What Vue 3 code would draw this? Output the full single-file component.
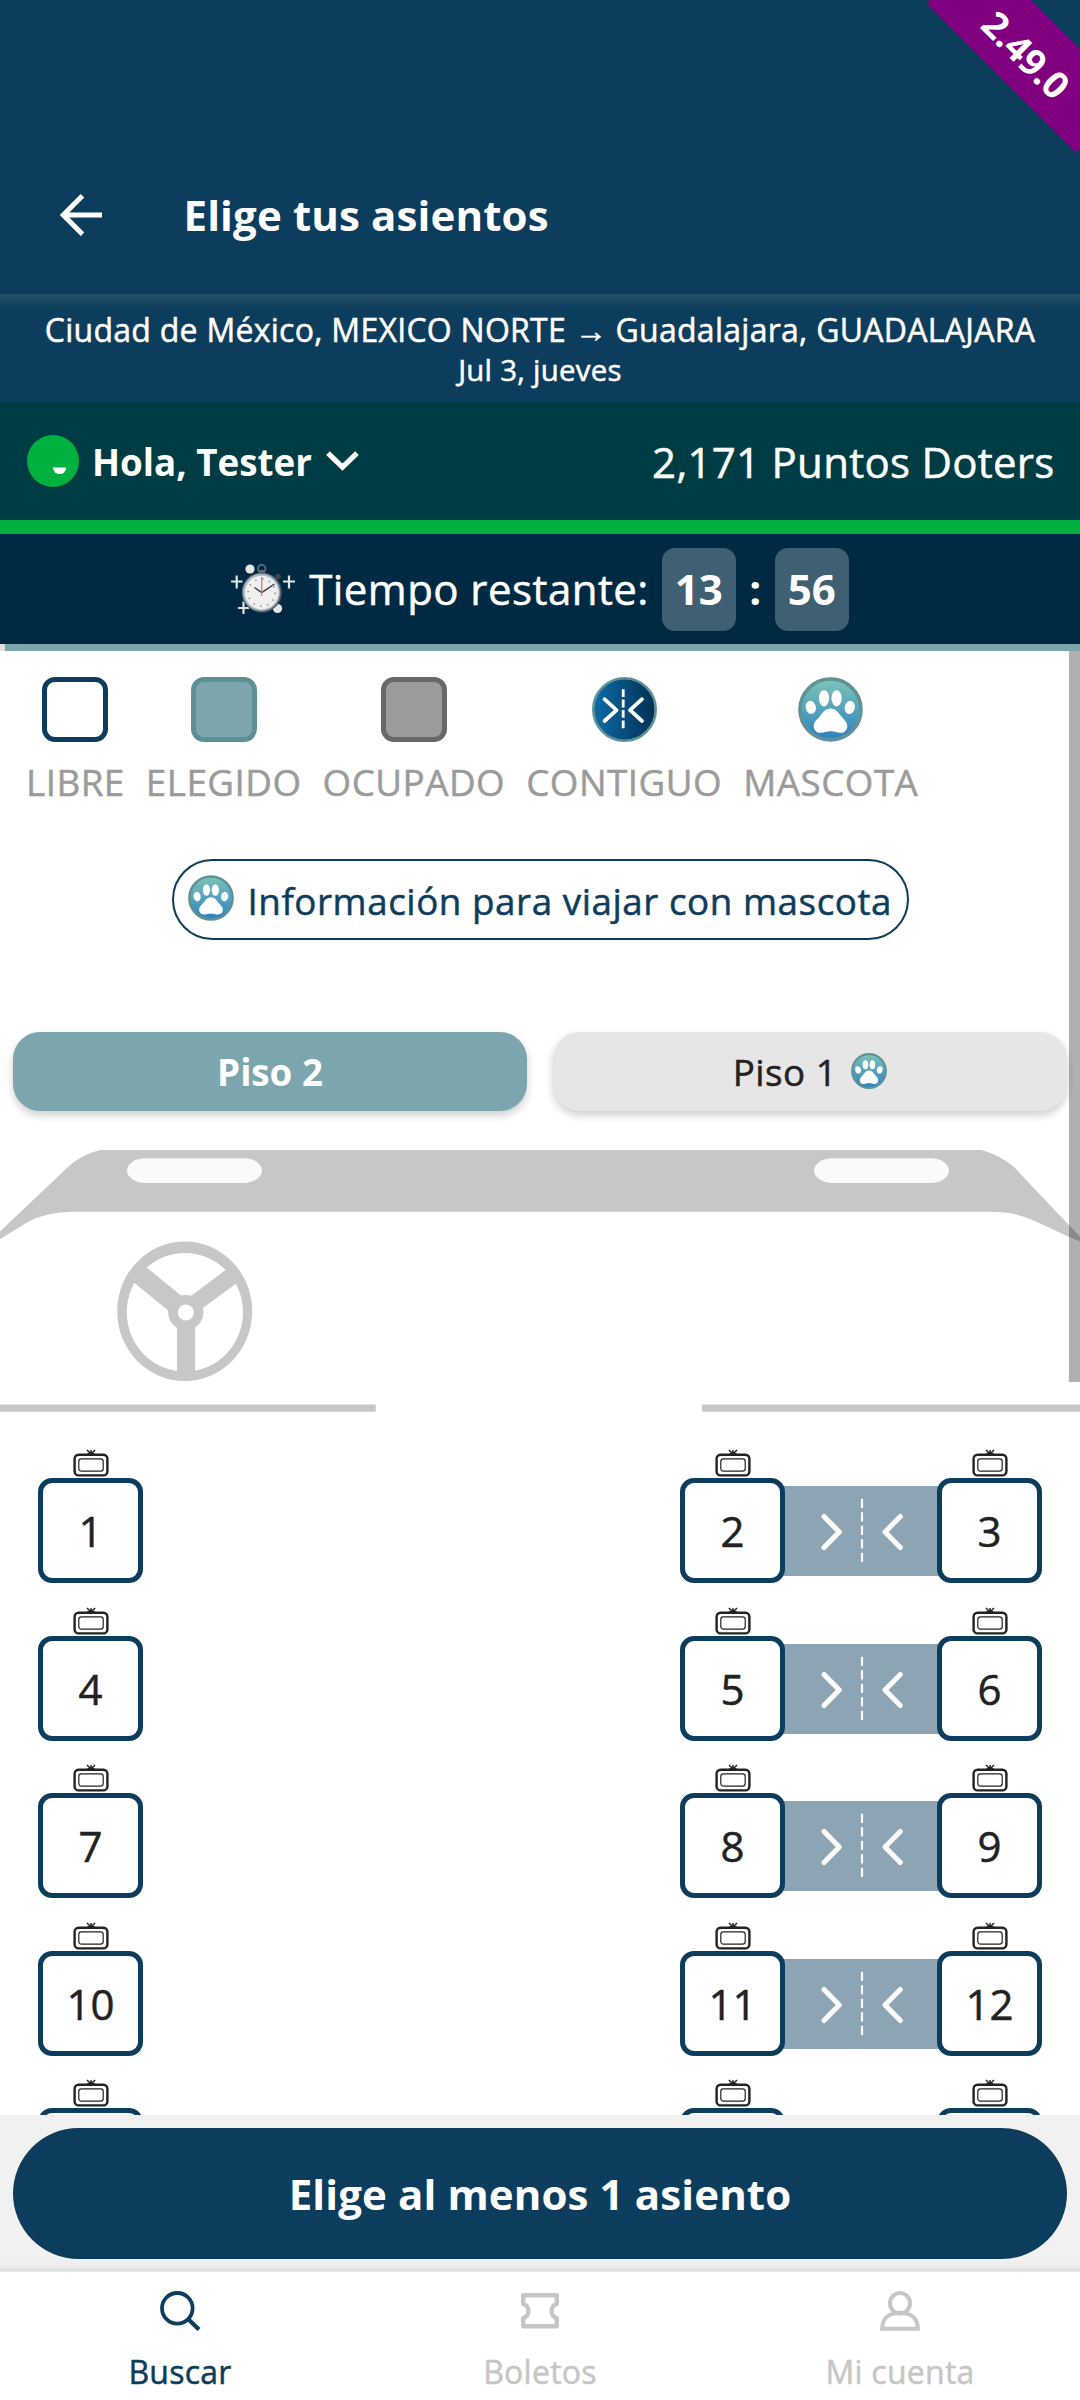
<script setup>
import { h } from 'vue'

const legend = [
  { label: 'LIBRE', kind: 'free' },
  { label: 'ELEGIDO', kind: 'chosen' },
  { label: 'OCUPADO', kind: 'taken' },
  { label: 'CONTIGUO', kind: 'adjacent' },
  { label: 'MASCOTA', kind: 'pet' },
]

const rows = [
  ['1', '2', '3'],
  ['4', '5', '6'],
  ['7', '8', '9'],
  ['10', '11', '12'],
  ['', '', ''],
]

const PawIcon = () =>
  h('svg', { viewBox: '0 0 64 64' }, [
    h('circle', { cx: 32, cy: 32, r: 30, fill: 'url(#pawFill)', stroke: '#5f9297', 'stroke-width': 3.6 }),
    h('g', { fill: '#fff' }, [
      h('ellipse', { cx: 12.6, cy: 30, rx: 5, ry: 6.6, transform: 'rotate(-12 12.6 30)' }),
      h('ellipse', { cx: 25.6, cy: 21, rx: 5, ry: 8 }),
      h('ellipse', { cx: 38, cy: 21, rx: 5, ry: 8 }),
      h('ellipse', { cx: 51, cy: 30, rx: 5, ry: 6.6, transform: 'rotate(12 51 30)' }),
      h('path', {
        d: 'M32 31c4.500 0 7.500 3.500 10 7 3 4 6.500 6 6.500 10.500 0 4-2.800 6.500-6.500 6.500-4 0-6-1.600-10-1.600S26 55 22 55c-3.700 0-6.500-2.500-6.500-6.500 0-4.500 3.500-6.500 6.500-10.500 2.500-3.500 5.500-7 10-7z',
      }),
    ]),
  ])

const TvIcon = () =>
  h('svg', { viewBox: '0 0 36 28', fill: 'none', stroke: '#222' }, [
    h('path', { d: 'M14 1l4 4 4-4M18 1v3', 'stroke-width': 1.5 }),
    h('path', { d: 'M12.500 5.500q5.500-4 11 0z', fill: '#222', stroke: 'none' }),
    h('rect', { x: 1.6, y: 5.8, width: 32.8, height: 20.6, rx: 4, 'stroke-width': 2.4 }),
    h('rect', { x: 5.8, y: 9.8, width: 24.4, height: 12.4, rx: 2.6, 'stroke-width': 1.2 }),
  ])
</script>

<template>
  <div class="app">
    <svg class="defs" width="0" height="0">
      <defs>
        <linearGradient id="pawFill" x1="0" y1="0" x2="0" y2="1">
          <stop offset="0.05" stop-color="#79c1b8" />
          <stop offset="0.95" stop-color="#2f84c2" />
        </linearGradient>
        <linearGradient id="adjFill" x1="0" y1="0" x2="1" y2="0">
          <stop offset="0.05" stop-color="#0c68a4" />
          <stop offset="1" stop-color="#013052" />
        </linearGradient>
      </defs>
    </svg>

    <header class="appbar">
      <svg class="back" width="42" height="42" viewBox="0 0 42 42" fill="none" stroke="#fff" stroke-width="5">
        <path d="M42 21H4M22.500 1.800L3.300 21l19.200 19.200" />
      </svg>
      <h1>Elige tus asientos</h1>
      <div class="ribbon">2.49.0</div>
    </header>

    <section class="trip">
      <p class="route">Ciudad de México, MEXICO NORTE <span class="arrow">→</span> Guadalajara, GUADALAJARA</p>
      <p class="date">Jul 3, jueves</p>
    </section>

    <section class="doters">
      <svg width="52" height="52" viewBox="0 0 52 52">
        <circle cx="26" cy="26" r="26" fill="#00b140" />
        <path d="M26 32.500h13.200a6.600 6.600 0 0 1-13.200 0z" fill="#fff" />
      </svg>
      <span class="hello">Hola, Tester</span>
      <svg class="chev" width="33" height="20" viewBox="0 0 33 20" fill="none" stroke="#fff" stroke-width="5.200">
        <path d="M2 2.200l14.500 14L31 2.200" />
      </svg>
      <span class="points">2,171 Puntos Doters</span>
    </section>

    <section class="timer">
      <svg width="64" height="50" viewBox="0 0 64 50">
        <g stroke="#e2e3e4" stroke-width="2.200">
          <path d="M0 17.500h11.500M5.700 11.500v13M52 17.500h12M58 11.500v13M7 44h11M12.500 37.500v13" />
        </g>
        <circle cx="19" cy="5" r="4.600" fill="#e6e6e6" />
        <circle cx="46.500" cy="44.500" r="4.600" fill="#e6e6e6" />
        <circle cx="30.700" cy="4.600" r="3.800" fill="none" stroke="#5d6d7c" stroke-width="1.800" />
        <path d="M27.500 7.500h6.500" stroke="#5d6d7c" stroke-width="3" />
        <circle cx="47" cy="12.500" r="2.800" fill="#3a4550" />
        <circle cx="30.700" cy="28.500" r="20" fill="#55606c" />
        <circle cx="30.400" cy="28.300" r="18.600" fill="#a9bacb" />
        <circle cx="30.700" cy="28.600" r="16.800" fill="#f1f0f1" />
        <circle cx="30.700" cy="28.600" r="13.600" fill="none" stroke="#9a9a9e" stroke-width="1.800" stroke-dasharray="1.500 5.620" />
        <path d="M23.500 23.500l7.200 5L43.500 20" fill="none" stroke="#333b45" stroke-width="1.500" />
        <path d="M30.700 13v19" stroke="#f0745e" stroke-width="1.300" />
      </svg>
      <span class="left">Tiempo restante:</span>
      <b class="digits">13</b>
      <b class="colon">:</b>
      <b class="digits">56</b>
    </section>
    <div class="progress"><i></i></div>

    <main class="content">
      <div class="legend">
        <div v-for="item in legend" :key="item.label" class="legend-item">
          <PawIcon v-if="item.kind === 'pet'" class="mark" />
          <svg v-else-if="item.kind === 'adjacent'" class="mark" viewBox="0 0 65 65">
            <circle cx="32.500" cy="32.500" r="31.200" fill="url(#adjFill)" stroke="#5f9297" stroke-width="2.600" />
            <g fill="none" stroke="#fff" stroke-width="3.800" stroke-linecap="round" stroke-linejoin="round">
              <path d="M12.500 22.200L24.500 33.200 12.500 44M50 22.200L38 33.200 50 44" />
            </g>
            <path d="M31.200 12.200v40" stroke="#fff" stroke-width="2.800" stroke-dasharray="7.800 2.600" />
          </svg>
          <span v-else class="mark box" :class="item.kind"></span>
          <span class="caption">{{ item.label }}</span>
        </div>
      </div>

      <button class="pet-info">
        <PawIcon class="paw" />
        <span>Información para viajar con mascota</span>
      </button>

      <div class="floors">
        <button class="floor active">Piso 2</button>
        <button class="floor"><span>Piso 1</span><PawIcon class="paw" /></button>
      </div>

      <svg class="bus" width="1080" height="262" viewBox="0 0 1080 262">
        <g fill="#c7c7c7">
          <path d="M100 0H981.500Q999 5 1013 16L1085 92Q1080 92 1069 87L1036 71.500Q1017 61.800 991 61.800H72Q46 62 28 72L0 89V81.500L69 16Q82 4.500 100 0z" />
          <path d="M0 254.600h375.700v7.200H0zM702 254.600h378v7.200H702z" />
          <path d="M177 175h18v52h-18zM129 128.600L142 113.600 184 148 170 162zM230 116.700L240 130.700 200 160 187 149z" />
        </g>
        <rect x="127" y="8.300" width="135" height="24.600" rx="18" ry="12.300" fill="#fafafa" />
        <rect x="814" y="8.300" width="135" height="24.600" rx="18" ry="12.300" fill="#fafafa" />
        <path fill="#c7c7c7" fill-rule="evenodd" d="M117.200 161.300a67.500 69.800 0 1 1 135 0a67.500 69.800 0 1 1-135 0zM126.800 162.300a58.100 59.300 0 1 0 116.200 0a58.100 59.300 0 1 0-116.200 0z" />
        <circle cx="185.800" cy="162.500" r="12.800" fill="#fff" stroke="#c7c7c7" stroke-width="9.600" />
      </svg>

      <div class="seats">
        <div v-for="(row, i) in rows" :key="i" class="row">
          <div class="slot">
            <TvIcon class="tv" />
            <div class="seat">{{ row[0] }}</div>
          </div>
          <div class="pair">
            <div class="slot">
              <TvIcon class="tv" />
              <div class="seat">{{ row[1] }}</div>
            </div>
            <svg class="link" width="168" height="90" viewBox="-8 0 168 90">
              <rect x="-8" width="168" height="90" fill="#8ca4b4" />
              <g fill="none" stroke="#fafafa" stroke-width="5.200" stroke-linecap="round" stroke-linejoin="round">
                <path d="M39 30.500L54.300 46 39 61.500M115.300 30.500L100 46l15.300 15.500" />
              </g>
              <path d="M77 12.800v63.400" stroke="#fafafa" stroke-width="2.200" stroke-dasharray="9.300 4.200" />
            </svg>
            <div class="slot">
              <TvIcon class="tv" />
              <div class="seat">{{ row[2] }}</div>
            </div>
          </div>
        </div>
      </div>

      <div class="scrollbar"></div>
    </main>

    <footer class="action">
      <button class="cta">Elige al menos 1 asiento</button>
    </footer>

    <nav class="tabs">
      <a class="tab current">
        <svg width="44" height="44" viewBox="0 0 44 44" fill="none" stroke="currentColor" stroke-width="3.800">
          <circle cx="19.300" cy="19.300" r="15.300" />
          <path d="M30 30l11 10.500" stroke-width="4.400" />
        </svg>
        <span>Buscar</span>
      </a>
      <a class="tab">
        <svg width="44" height="44" viewBox="0 0 44 44" fill="none" stroke="currentColor" stroke-width="4.400">
          <path d="M5.200 6.200h33.600v8.600a7.600 7.600 0 0 0 0 14.400v8H5.200v-8a7.600 7.600 0 0 0 0-14.400z" stroke-linejoin="round" />
        </svg>
        <span>Boletos</span>
      </a>
      <a class="tab">
        <svg width="44" height="44" viewBox="0 0 44 44" fill="none" stroke="currentColor" stroke-width="4">
          <ellipse cx="22" cy="14.300" rx="10" ry="10.300" />
          <path d="M4.200 39.800c0-10.500 7-16 17.800-16s17.800 5.500 17.800 16z" />
        </svg>
        <span>Mi cuenta</span>
      </a>
    </nav>
  </div>
</template>

<style>
body {
  margin: 0;
  background: #fff;
}
</style>

<style scoped>
.app {
  position: relative;
  display: flex;
  flex-direction: column;
  width: 1080px;
  height: 2400px;
  overflow: hidden;
  background: #fff;
  font-family: 'Open Sans', 'Noto Sans', sans-serif;
}
.app * {
  box-sizing: border-box;
}
svg {
  display: block;
  flex: none;
}
.defs {
  position: absolute;
}
p,
h1 {
  margin: 0;
}
button {
  border: 0;
  font: inherit;
  padding: 0;
}
.route,
.date,
.points,
.left,
.caption,
.pet-info span,
.floor span,
.seat,
.tab span {
  -webkit-text-stroke: 0.500px currentColor;
}
.appbar {
  position: relative;
  display: flex;
  align-items: center;
  height: 294px;
  padding: 136px 0 0 60px;
  overflow: hidden;
  background: #0d3d5c;
  color: #fff;
}
.appbar h1 {
  margin: -2px 0 0 81.500px;
  font-size: 42px;
  font-weight: 700;
  letter-spacing: 0.130px;
}
.ribbon {
  position: absolute;
  left: 922.700px;
  top: 12.900px;
  width: 210.600px;
  height: 76px;
  padding: 4px 0 0 2px;
  line-height: 76px;
  transform: rotate(45deg);
  background: #800080;
  text-align: center;
  font-size: 37px;
  font-weight: 700;
}
.trip {
  height: 108px;
  padding-top: 14px;
  background: linear-gradient(#245069, #0d3d5c 14px);
  color: #fff;
  text-align: center;
}
.route {
  font-size: 32px;
  letter-spacing: 0.270px;
  line-height: 44px;
  white-space: nowrap;
}
.date {
  font-size: 29.400px;
  letter-spacing: 0.270px;
  line-height: 36px;
}
.doters {
  display: flex;
  align-items: center;
  height: 118px;
  padding: 0 25.500px 0 27px;
  background: #003c43;
  color: #fff;
}
.hello {
  margin: 2px 0 0 13px;
  font-size: 36.750px;
  font-weight: 700;
}
.chev {
  margin-left: 14px;
}
.points {
  margin-left: auto;
  font-size: 42px;
  letter-spacing: 0.270px;
}
.timer {
  display: flex;
  align-items: center;
  justify-content: center;
  height: 124px;
  border-top: 14px solid #00b140;
  background: #002a43;
  color: #fff;
  font-size: 42px;
}
.left {
  margin: -2px 0 0 14px;
  letter-spacing: 0.450px;
}
.digits {
  width: 74px;
  height: 83px;
  border-radius: 13px;
  background: #3f5f72;
  line-height: 81px;
  text-align: center;
}
.left + .digits {
  margin-left: 13px;
}
.colon {
  width: 39px;
  margin-top: -2px;
  text-align: center;
}
.progress {
  height: 7px;
  padding-left: 5px;
  background: #e0e0e0;
}
.progress i {
  display: block;
  height: 7px;
  background: #7ca6ad;
}
.content {
  position: relative;
  height: 1464px;
  overflow: hidden;
}
.legend {
  display: flex;
  gap: 21px;
  height: 208px;
  padding: 26px 0 0 26px;
}
.legend-item {
  display: flex;
  flex-direction: column;
  align-items: center;
  gap: 15px;
}
.mark {
  width: 65px;
  height: 65px;
}
.box {
  border: 5px solid #0d3d5c;
  border-radius: 13px;
  width: 66px;
}
.chosen {
  border-color: #5d9096;
  background: #7ca6ad;
}
.taken {
  border-color: #686868;
  background: #9b9b9b;
}
.caption {
  color: #9b9b9b;
  font-size: 36.750px;
  letter-spacing: 0.500px;
  line-height: 50px;
}
.pet-info {
  display: flex;
  align-items: center;
  width: 737px;
  height: 81px;
  margin: 0 0 0 171.500px;
  padding-left: 14px;
  border: 2.500px solid #0d3d5c;
  border-radius: 41px;
  background: #fff;
  color: #0d3d5c;
  font-size: 36.750px;
  letter-spacing: 0.560px;
  white-space: nowrap;
}
.pet-info .paw {
  width: 46px;
  height: 46px;
  margin: 0 14px 3px 0;
}
.pet-info span {
  margin-top: 2px;
}
.floors {
  display: flex;
  gap: 26px;
  padding: 92px 13px 0;
}
.floor {
  display: flex;
  flex: 1;
  align-items: center;
  justify-content: center;
  height: 79px;
  padding-top: 1px;
  border-radius: 27px;
  background: #e6e6e6;
  box-shadow: 0 4px 8px rgba(0, 0, 0, 0.2);
  color: #222;
  font-size: 36.750px;
}
.floor span {
  letter-spacing: 0.500px;
}
.floor .paw {
  width: 36px;
  height: 36px;
  margin: 0 0 2px 14px;
}
.floor.active {
  background: #7ca6ad;
  color: #fff;
  font-weight: 700;
}
.bus {
  margin-top: 39px;
}
.seats {
  padding: 37px 38px 0;
}
.row {
  display: flex;
  justify-content: space-between;
  height: 157.500px;
}
.pair {
  display: flex;
}
.slot {
  position: relative;
  z-index: 1;
  display: flex;
  flex-direction: column;
  align-items: center;
}
.tv {
  width: 36px;
  height: 28px;
  margin-bottom: 1px;
}
.seat {
  width: 105px;
  height: 105px;
  border: 5px solid #0d3d5c;
  border-radius: 14px;
  background: #fff;
  color: #222;
  font-size: 42px;
  line-height: 95px;
  text-align: center;
}
.link {
  margin: 37px -8px 0;
}
.scrollbar {
  position: absolute;
  top: 0;
  right: 0;
  z-index: 2;
  width: 11px;
  height: 731px;
  background: rgba(0, 0, 0, 0.31);
}
.action {
  height: 157px;
  padding: 13px;
  background: linear-gradient(#f1f1f1 145px, #ebebeb 153px, #dedede 154px, #e6e6e6);
}
.cta {
  display: block;
  width: 1054px;
  height: 131px;
  border-radius: 66px;
  background: #0d3d5c;
  color: #fff;
  font-size: 42px;
  font-weight: 700;
  letter-spacing: 0.120px;
}
.tabs {
  display: flex;
  height: 128px;
  background: #fff;
}
.tab {
  display: flex;
  flex: 1;
  flex-direction: column;
  align-items: center;
  padding-top: 17px;
  color: #c6c6c6;
  font-size: 32px;
}
.tab span {
  margin-top: 17px;
  letter-spacing: 0.250px;
  line-height: 44px;
}
.current {
  color: #0d3d5c;
}
</style>
